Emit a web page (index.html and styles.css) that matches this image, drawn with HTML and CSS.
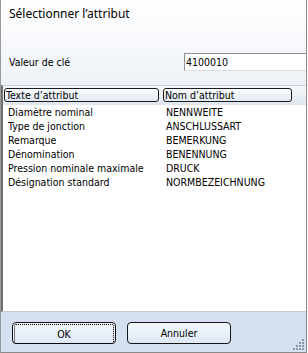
FILE: index.html
```html
<!DOCTYPE html>
<html lang="fr">
<head>
<meta charset="UTF-8">
<title>Sélectionner l'attribut</title>
<link rel="stylesheet" href="styles.css">
</head>
<body>

<div class="dialog">
    <div class="top">
        <div class="title">Sélectionner l’attribut</div>
        <div class="key-row">
            <div class="key-label">Valeur de clé</div>
            <div class="key-input">4100010</div>
        </div>
    </div>

    <div class="list">
        <div class="list-head">
            <div class="col-head first">Texte d’attribut</div>
            <div class="col-head second">Nom d’attribut</div>
        </div>
        <div class="row"><span class="c1">Diamètre nominal</span><span class="c2">NENNWEITE</span></div>
        <div class="row"><span class="c1">Type de jonction</span><span class="c2">ANSCHLUSSART</span></div>
        <div class="row"><span class="c1">Remarque</span><span class="c2">BEMERKUNG</span></div>
        <div class="row"><span class="c1">Dénomination</span><span class="c2">BENENNUNG</span></div>
        <div class="row"><span class="c1">Pression nominale maximale</span><span class="c2">DRUCK</span></div>
        <div class="row"><span class="c1">Désignation standard</span><span class="c2">NORMBEZEICHNUNG</span></div>
    </div>

    <div class="buttons">
        <div class="btn default"><span class="focus">OK</span></div>
        <div class="btn">Annuler</div>
        <!-- size grip -->
        <svg class="grip" width="12" height="12" viewBox="0 0 12 12">
            <g fill="#8c96a4">
                <rect x="9" y="0" width="2" height="2"/>
                <rect x="6" y="3" width="2" height="2"/><rect x="9" y="3" width="2" height="2"/>
                <rect x="3" y="6" width="2" height="2"/><rect x="6" y="6" width="2" height="2"/><rect x="9" y="6" width="2" height="2"/>
                <rect x="0" y="9" width="2" height="2"/><rect x="3" y="9" width="2" height="2"/><rect x="6" y="9" width="2" height="2"/><rect x="9" y="9" width="2" height="2"/>
            </g>
        </svg>
    </div>
</div>

</body>
</html>
```

FILE: styles.css
```css
body {
    margin: 0;
    font-family: "DejaVu Sans Condensed", "DejaVu Sans", sans-serif;
    font-size: 10.5px;
    color: #000;
    background: #fff;
}

.dialog {
    width: 307px;
    height: 353px;
    box-sizing: border-box;
    border-left: 1px solid #9a9a9a;
    border-right: 1px solid #8a8a8a;
    border-bottom: 1px solid #8a8a8a;
    display: flex;
    flex-direction: column;
    position: relative;
}

.top {
    height: 85px;
    box-sizing: border-box;
    padding: 6px 0 0 8px;
    background: linear-gradient(#ffffff, #eef2f8);
}

.title {
    font-family: "Noto Sans", "Open Sans", sans-serif;
    font-size: 12px;
    line-height: 16px;
}

.key-row {
    display: flex;
    align-items: center;
    margin-top: 31px;
}

.key-label {
    width: 175px;
}

.key-input {
    flex: 1;
    height: 18px;
    line-height: 17px;
    box-sizing: border-box;
    padding-left: 1px;
    background: #fff;
    border-top: 1px solid #8f8f8f;
    border-left: 1px solid #8f8f8f;
    border-bottom: 1px solid #dcdcdc;
}

.list {
    flex: 1;
    background: #fff;
    border-top: 1px solid #c9d1db;
    border-left: 2px solid #6e6e6e;
    border-bottom: 1px solid #c6ccd4;
}

.list-head {
    display: flex;
    gap: 4px;
    height: 19px;
    box-sizing: border-box;
    padding: 2px 0 0 1px;
    background: linear-gradient(#f7f9fb, #dfe6ef);
}

.col-head {
    height: 14px;
    line-height: 13px;
    box-sizing: border-box;
    padding-left: 1px;
    border: 1px solid #1a1a1a;
    border-radius: 3px;
    background: linear-gradient(#fafcfe, #e2eaf4);
}

.first {
    width: 155px;
}

.second {
    width: 129px;
}

.row {
    display: flex;
    height: 14px;
    line-height: 14px;
    padding-left: 5px;
}

.c1 {
    width: 158px;
}

.buttons {
    height: 40px;
    box-sizing: border-box;
    display: flex;
    gap: 11px;
    padding: 10px 0 0 11px;
    background: #d5e0f0;
    position: relative;
}

.btn {
    width: 104px;
    height: 22px;
    box-sizing: border-box;
    border: 1px solid #151515;
    border-radius: 4px;
    background: linear-gradient(#f4f8fd, #dde9f6);
    text-align: center;
    line-height: 20px;
}

.default {
    padding: 1px;
}

.focus {
    display: block;
    height: 18px;
    line-height: 18px;
    border: 1px dotted #000;
    border-radius: 2px;
}

.grip {
    position: absolute;
    right: 1px;
    bottom: 1px;
}
```
